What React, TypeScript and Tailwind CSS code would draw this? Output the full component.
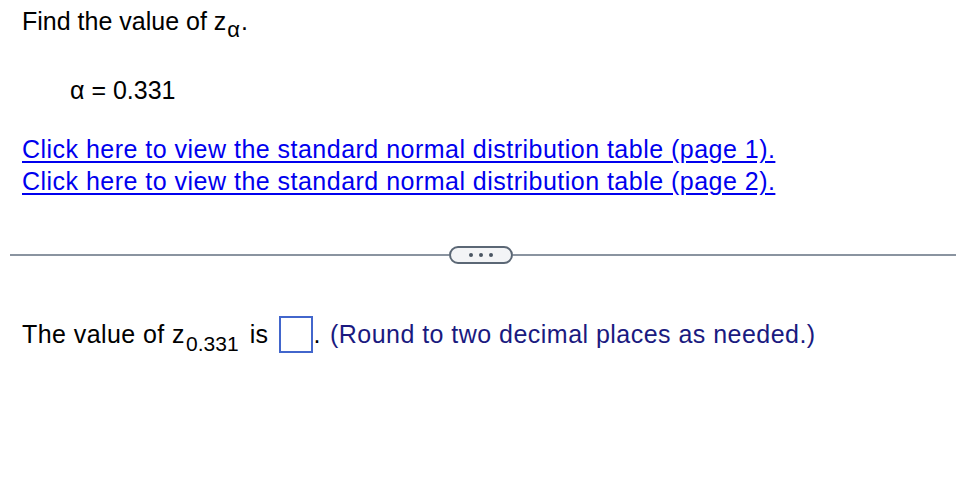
import React from 'react';

const App = () => {
    return (
        <div className="w-[956px] h-[502px] bg-white text-black font-['Liberation_Sans',Arial,sans-serif]">
            <div className="pl-[22px] pt-[6px]">
                {/* heading */}
                <p className="text-[25px] leading-[30px]">
                    Find the value of z
                    <span className="text-[22px] relative top-[7px] mx-[1px]">α</span>.
                </p>
                <p className="pl-[48px] mt-[37px] text-[25px] leading-[30px]">α = 0.331</p>

                <div className="mt-[28px] flex flex-col">
                    <a href="#" className="self-start text-[25px] leading-[32px] tracking-[0.48px] text-[#0000ee] underline underline-offset-[3px]">
                        Click here to view the standard normal distribution table (page 1).
                    </a>
                    <a href="#" className="self-start text-[25px] leading-[32px] tracking-[0.48px] text-[#0000ee] underline underline-offset-[3px]">
                        Click here to view the standard normal distribution table (page 2).
                    </a>
                </div>
            </div>

            {/* divider with expander */}
            <div className="mt-[49px] ml-[10px] flex items-center">
                <div className="w-[439px] h-[2px] bg-[#8a94a0]" />
                <button className="w-[64px] h-[18px] rounded-full border-2 border-[#5b6775] bg-[#f3f4f6] flex items-center justify-center gap-[6px]">
                    <span className="w-[4px] h-[4px] rounded-full bg-[#4b5563]" />
                    <span className="w-[4px] h-[4px] rounded-full bg-[#4b5563]" />
                    <span className="w-[4px] h-[4px] rounded-full bg-[#4b5563]" />
                </button>
                <div className="flex-1 h-[2px] bg-[#8a94a0]" />
            </div>

            {/* answer row */}
            <div className="pl-[22px] mt-[52px] flex items-center text-[25px] tracking-[0.43px]">
                <span>The value of z</span>
                <span className="text-[21px] relative top-[9px] ml-[1px] tracking-normal">0.331</span>
                <span className="ml-[11px]">is</span>
                <span className="ml-[10px] w-[34px] h-[37px] border-2 border-[#4266cc] inline-block" />
                <span className="ml-[1px]">.</span>
                <span className="ml-[9px] text-[#1a1a80] tracking-[0.47px]">(Round to two decimal places as needed.)</span>
            </div>
        </div>
    );
};

export default App;
